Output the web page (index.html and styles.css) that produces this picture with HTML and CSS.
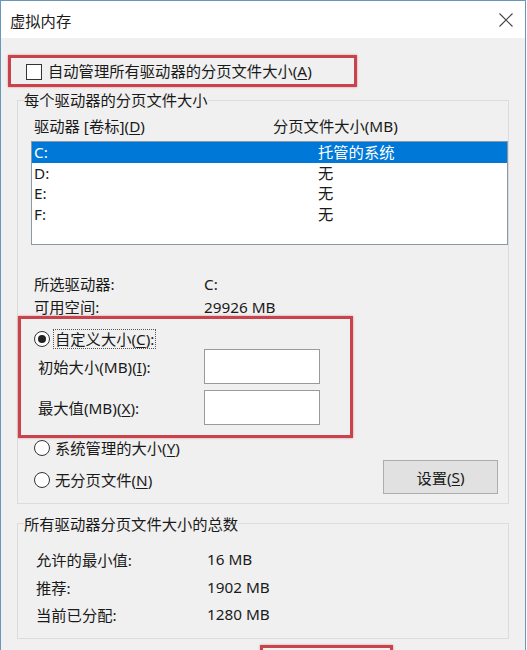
FILE: index.html
```html
<!DOCTYPE html>
<html lang="zh-CN">
<head>
<meta charset="utf-8">
<title>虚拟内存</title>
<link rel="stylesheet" href="styles.css">
</head>
<body>
<div class="window">
  <div class="titlebar">
    <span class="title">虚拟内存</span>
    <svg class="close" width="14" height="14" viewBox="0 0 14 14"><path d="M0.5 0.5 L13.5 13.5 M13.5 0.5 L0.5 13.5" stroke="#444" stroke-width="1.1" fill="none"/></svg>
  </div>

  <div class="mark mark-auto">
    <span class="checkbox"></span>
    <span class="cb-label">自动管理所有驱动器的分页文件大小(<u>A</u>)</span>
  </div>

  <fieldset class="group group-drives">
    <legend>每个驱动器的分页文件大小</legend>
    <div class="list-head">
      <span>驱动器 [卷标](<u>D</u>)</span>
      <span>分页文件大小(MB)</span>
    </div>
    <div class="listbox">
      <div class="row selected"><span>C:</span><span>托管的系统</span></div>
      <div class="row"><span>D:</span><span>无</span></div>
      <div class="row"><span>E:</span><span>无</span></div>
      <div class="row"><span>F:</span><span>无</span></div>
    </div>
    <div class="info">
      <span>所选驱动器:</span><span>C:</span>
      <span>可用空间:</span><span>29926 MB</span>
    </div>

    <div class="mark mark-custom">
      <div class="radio-row">
        <span class="radio checked"></span>
        <span class="r-label focus">自定义大小(<u>C</u>):</span>
      </div>
      <div class="size-row">
        <span>初始大小(MB)(<u>I</u>):</span>
        <span class="input"></span>
      </div>
      <div class="size-row second">
        <span>最大值(MB)(<u>X</u>):</span>
        <span class="input"></span>
      </div>
    </div>

    <div class="radio-row outer">
      <span class="radio"></span>
      <span class="r-label">系统管理的大小(<u>Y</u>)</span>
    </div>
    <div class="last-row">
      <div class="radio-row outer nofile">
        <span class="radio"></span>
        <span class="r-label">无分页文件(<u>N</u>)</span>
      </div>
      <span class="button">设置(<u>S</u>)</span>
    </div>
  </fieldset>

  <fieldset class="group group-total">
    <legend>所有驱动器分页文件大小的总数</legend>
    <div class="totals">
      <span>允许的最小值:</span><span>16 MB</span>
      <span>推荐:</span><span>1902 MB</span>
      <span>当前已分配:</span><span>1280 MB</span>
    </div>
  </fieldset>

  <div class="mark mark-ok"></div>
</div>
</body>
</html>
```
FILE: styles.css
```css
* { box-sizing: border-box; }
html, body { margin: 0; padding: 0; background: #ffffff; }
body {
  font-family: "Noto Sans", "Noto Sans CJK SC", sans-serif;
  font-size: 15.3px;
  color: #1a1a1a;
}
u { text-decoration-thickness: 1px; text-underline-offset: 2px; }

.window {
  width: 526px;
  height: 650px;
  border: 1px solid #6a96b8;
  border-bottom: none;
  background: #f0f0f0;
  overflow: hidden;
}

.titlebar {
  height: 37px;
  background: #ffffff;
  display: flex;
  align-items: center;
  justify-content: space-between;
  padding-left: 9px;
  padding-right: 12px;
}
.title { line-height: 20px; margin-top: 2px; }
.close { display: block; margin-top: 1px; }

.mark {
  border: 3px solid #c8434b;
  box-shadow: 0 0 2px rgba(200, 67, 75, 0.55);
}

.mark-auto {
  margin: 17px 0 0 7px;
  width: 349px;
  height: 32px;
  display: flex;
  align-items: center;
}
.checkbox {
  width: 16px;
  height: 16px;
  border: 1px solid #333;
  background: #fff;
  margin-left: 15px;
  margin-top: 1px;
}
.cb-label { margin-left: 6px; font-size: 15.3px; line-height: 20px; }

.group {
  margin: 0 0 0 16px;
  padding: 0;
  width: 492px;
  min-inline-size: 0;
  border: 1px solid #dcdcdc;
}
.group legend {
  padding: 0;
  margin-left: 6px;
  line-height: 20px;
}
.group-drives { margin-top: 3px; padding-bottom: 9px; }

.list-head {
  display: grid;
  grid-template-columns: 239px 1fr;
  padding-left: 16px;
  margin-top: 6px;
  line-height: 20px;
}

.listbox {
  margin: 5px 0 0 13px;
  width: 477px;
  height: 104px;
  background: #ffffff;
  border: 1px solid #8a98a8;
}
.row {
  display: grid;
  grid-template-columns: 284px 1fr;
  height: 20.5px;
  line-height: 20.5px;
  padding-left: 2px;
}
.row.selected { background: #0078d7; color: #ffffff; }

.info {
  display: grid;
  grid-template-columns: 170px 1fr;
  row-gap: 4.5px;
  line-height: 18px;
  padding-left: 16px;
  margin-top: 30px;
}

.mark-custom {
  width: 335px;
  height: 122px;
  padding-top: 10px;
}
.radio-row {
  display: flex;
  align-items: center;
  height: 20px;
  margin-left: 13px;
}
.radio {
  width: 16px;
  height: 16px;
  border: 1px solid #333;
  border-radius: 50%;
  background: #fff;
  display: flex;
  align-items: center;
  justify-content: center;
  flex: none;
}
.radio.checked::after {
  content: "";
  width: 8px;
  height: 8px;
  border-radius: 50%;
  background: #222;
}
.r-label {
  margin-left: 3px;
  padding: 0 1px;
  border: 1px solid transparent;
  line-height: 18px;
}
.r-label.focus { border: 1px dotted #555; }

.size-row {
  display: grid;
  grid-template-columns: 166px 116px;
  align-items: center;
  padding-left: 17px;
}
.size-row.second { margin-top: 6px; }
.input {
  height: 35px;
  background: #ffffff;
  border: 1px solid #9a9a9a;
}

.radio-row.outer { margin-left: 16px; }

.last-row {
  display: flex;
  justify-content: space-between;
  align-items: flex-start;
  margin-top: 2px;
  padding-right: 10px;
}
.nofile { margin-top: 10px; }
.button {
  width: 115px;
  height: 34px;
  background: #e1e1e1;
  border: 1px solid #adadad;
  display: flex;
  align-items: center;
  justify-content: center;
}

.group-total { margin-top: 10px; padding-bottom: 10px; }
.totals {
  display: grid;
  grid-template-columns: 171px 1fr;
  grid-auto-rows: 27.5px;
  align-items: center;
  padding-left: 18px;
  padding-top: 12px;
}

.mark-ok {
  margin: 6px 0 0 259px;
  width: 133px;
  height: 40px;
}
```
